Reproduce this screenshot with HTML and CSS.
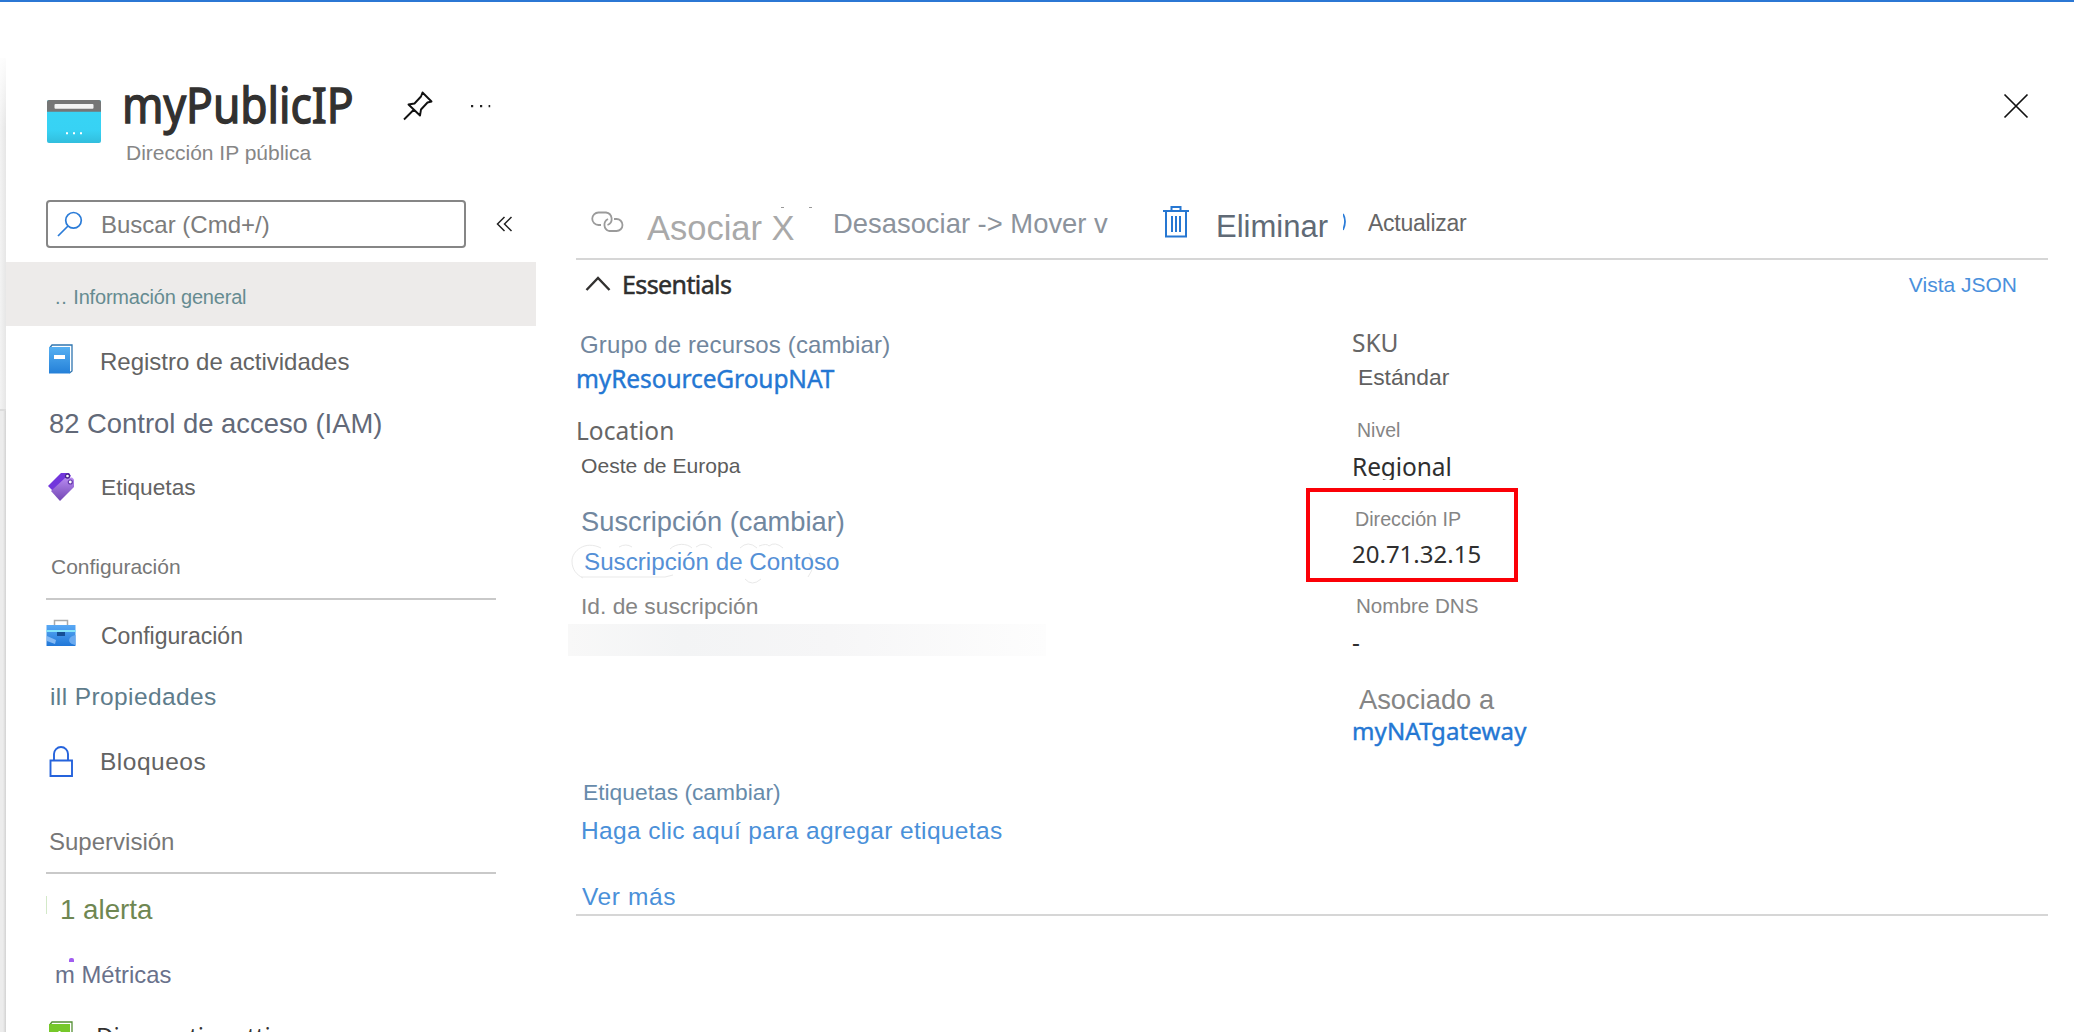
FILE: index.html
```html
<!DOCTYPE html>
<html lang="es">
<head>
<meta charset="utf-8">
<title>myPublicIP</title>
<link rel="stylesheet" href="styles.css">
</head>
<body>
<div class="page">
  <div class="edge"><div class="edge-top"></div><div class="edge-bottom"></div></div>
  <aside class="sidebar">
    <header class="head">
      <svg class="head-icon" width="54" height="43" viewBox="0 0 54 44" preserveAspectRatio="none">
        <defs><linearGradient id="cy" x1="0" y1="0" x2="0" y2="1"><stop offset="0" stop-color="#37d5f6"/><stop offset=".7" stop-color="#37d2f4"/><stop offset="1" stop-color="#32bedd"/></linearGradient></defs>
        <rect width="54" height="44" rx="2" fill="url(#cy)"/>
        <path d="M0 12V2a2 2 0 0 1 2-2h50a2 2 0 0 1 2 2v10z" fill="#767676"/>
        <rect x="7.500" y="4" width="39" height="5" rx="1" fill="#f4f4f4"/>
        <path d="M19 33h2v2h-2zM26 33h2v2h-2zM33 33h2v2h-2z" fill="#fff"/>
      </svg>
      <div class="names">
        <h1 class="title">myPublicIP</h1>
        <div class="kind">Dirección IP pública</div>
      </div>
      <svg class="pin" width="30" height="30" viewBox="0 0 30 30" fill="none" stroke="#111" stroke-width="1.900" stroke-linejoin="round"><path d="M19.500 1.500 28.500 10.500 24.500 11.500 18 18.500 17 24.500 5.500 13.500 11.500 12.500 18 5.500zM10.500 19 1 28.500"/></svg>
      <svg class="more" width="22" height="4" viewBox="0 0 22 4" fill="#222"><path d="M1 1h2.200v2.200H1zM10 1h2.200v2.200H10zM18.600 1h1.600v2.200h-1.600z"/></svg>
    </header>
    <div class="search-row">
      <div class="search">
        <svg width="26" height="26" viewBox="0 0 26 26" fill="none" stroke="#2b7cd8" stroke-width="1.700"><circle cx="16.500" cy="9.300" r="7.800"/><path d="M11 15 1 25"/></svg>
        <span class="search-text">Buscar (Cmd+/)</span>
      </div>
      <svg class="collapse" width="17" height="16" viewBox="0 0 17 16" fill="none" stroke="#222" stroke-width="1.500"><path d="M8.500 1 1.500 8l7 7M15.500 1l-7 7 7 7"/></svg>
    </div>
    <nav class="nav">
      <div class="row overview"><span class="dots">..</span> Información general</div>
      <div class="row activity">
        <svg class="ico" width="30" height="30" viewBox="0 0 30 30"><defs><linearGradient id="bk" x1="0" y1="0" x2="0" y2="1"><stop offset="0" stop-color="#56b0f2"/><stop offset="1" stop-color="#2480d8"/></linearGradient></defs><path d="M4 3.500 6 1h20v26l-2.500 2" fill="#fff" stroke="#2f75b0" stroke-width="1.300"/><path d="M3 3h21v26.500H3z" fill="url(#bk)"/><path d="M8 11h11v4H8z" fill="#fff"/></svg>
        <span>Registro de actividades</span></div>
      <div class="row access">82 Control de acceso (IAM)</div>
      <div class="row tags">
        <svg class="ico" width="30" height="30" viewBox="0 0 30 30"><defs><linearGradient id="tg" x1="0" y1="0" x2="0" y2="1"><stop offset="0" stop-color="#b78af0"/><stop offset="1" stop-color="#7246b4"/></linearGradient></defs><path d="M2 14 15 1h8l2 3-18 15z" fill="#7236dc"/><path d="M5 19 19 6l7-.500 2 2V15L14 29z" fill="url(#tg)"/><circle cx="21.500" cy="4" r="2" fill="#fff" stroke="#4a258f" stroke-width="1.300"/><circle cx="24.300" cy="10" r="2" fill="#fff" stroke="#6339a8" stroke-width="1.200"/></svg>
        <span>Etiquetas</span></div>
      <div class="row section conf-head">Configuración</div>
      <div class="row config">
        <svg class="ico" width="30" height="28" viewBox="0 0 30 28"><defs><linearGradient id="bc" x1="0" y1="0" x2="0" y2="1"><stop offset="0" stop-color="#5aa9f5"/><stop offset="1" stop-color="#2077d8"/></linearGradient></defs><path d="M8.500 7V1.500h13V7" fill="none" stroke="#aaa" stroke-width="1.500"/><path d="M.500 6h29v21H.500z" fill="url(#bc)"/><path d="M.500 11h29v2H.500z" fill="#84e4fa"/><path d="M11 13h8v4h-8z" fill="#164f96"/><path d="m1 17 9 4-1 4-8-3z" fill="#83b9f4"/><path d="M29.500 16v10c-8-1-9-8 0-10z" fill="#6aaaf0"/></svg>
        <span>Configuración</span></div>
      <div class="row props">ill Propiedades</div>
      <div class="row locks">
        <svg class="ico" width="30" height="32" viewBox="0 0 30 32" fill="none" stroke="#2563dc" stroke-width="1.900"><path d="M4.500 14.500h21.500v15.500H4.500zM8 14V8a7 7 0 0 1 14 0v6"/></svg>
        <span>Bloqueos</span></div>
      <div class="row section sup-head">Supervisión</div>
      <div class="row alert">1 alerta</div>
      <div class="row metrics">m Métricas</div>
      <div class="row diag">
        <svg class="ico" width="30" height="30" viewBox="0 0 30 30"><path d="M4 3.500 6 1h20v26l-2.500 2" fill="#fff" stroke="#549033" stroke-width="1.300"/><path d="M3 3h21v26.500H3z" fill="#76c82a"/><path d="M12.500 10h2v8h-2z" fill="#fff"/></svg>
        <span>Diagnostic settings</span></div>
    </nav>
  </aside>
  <main class="main">
    <div class="close-row"><svg width="26" height="26" viewBox="0 0 26 26" fill="none" stroke="#111" stroke-width="1.700"><path d="M1.500 1.500l23 23M24.500 1.500l-23 23"/></svg></div>
    <div class="toolbar">
      <svg class="link" width="34" height="22" viewBox="0 0 34 22" fill="none" stroke="#9b9b9b" stroke-width="1.800"><path d="M10 14H7.500a6 6 0 0 1 0-12.500H15A6.500 6.500 0 0 1 16.500 14M23 8h2.500a6 6 0 0 1 0 12H18a6.500 6.500 0 0 1-1-12"/></svg>
      <span class="associate">Asociar X<svg class="specks" width="34" height="3" viewBox="0 0 34 3" fill="#999"><path d="M1 1h3v1H1zM29 1h3v1h-3z"/></svg></span>
      <span class="dissociate">Desasociar -&gt; Mover v</span>
      <svg class="trash" width="28" height="34" viewBox="0 0 28 34" fill="none" stroke="#2677d2" stroke-width="2"><path d="M1 6h26M9.500 6V2h9v4M4 6v25.500h20V6M10 11v16M14 11v16M18 11v16"/></svg>
      <span class="delete">Eliminar</span>
      <svg class="arc" width="5" height="18" viewBox="0 0 5 18" fill="none" stroke="#2b7cd8" stroke-width="1.800"><path d="M0 1q4 7 0 16"/></svg>
      <span class="refresh">Actualizar</span>
    </div>
    <div class="essentials">
      <svg width="26" height="16" viewBox="0 0 26 16" fill="none" stroke="#323130" stroke-width="2.400"><path d="M1.500 14 13 2l11.500 12"/></svg>
      <span class="ess-title">Essentials</span>
      <span class="json">Vista JSON</span>
    </div>
    <div class="details">
      <div class="col">
        <div class="f rg">Grupo de recursos (cambiar)</div>
        <div class="f s rg-name">myResourceGroupNAT</div>
        <div class="f s loc">Location</div>
        <div class="f loc-val">Oeste de Europa</div>
        <div class="f sub">Suscripción (cambiar)</div>
        <div class="f sub-val">Suscripción de Contoso<svg class="halo" width="244" height="42" viewBox="0 0 244 42" fill="none" stroke="#e9e9e9" stroke-width="1"><path d="M30 5C14-3 1 8 1 18c0 9 5 14 11 17M48 4q7-4 13 0M99 6c6-6 17-6 22-1M125 4q8-6 16 1M169 5q8-8 17 0M188 3q8-3 10 0 6-5 14 2M238 10q8 12-1 24M174 36q7 8 16 0M10 34h84l8-2"/></svg></div>
        <div class="f id">Id. de suscripción</div>
        <div class="redacted"></div>
        <div class="f tg">Etiquetas (cambiar)</div>
        <div class="f tg-val">Haga clic aquí para agregar etiquetas</div>
        <div class="f seemore">Ver más</div>
      </div>
      <div class="col">
        <div class="f s sku">SKU</div>
        <div class="f sku-val">Estándar</div>
        <div class="f tier">Nivel</div>
        <div class="f s tier-val">Regional</div>
        <div class="ipbox">
          <div class="f ip">Dirección IP</div>
          <div class="f s ip-val">20.71.32.15</div>
        </div>
        <div class="f dns">Nombre DNS</div>
        <div class="f s dns-val">-</div>
        <div class="f assoc">Asociado a</div>
        <div class="f s assoc-val">myNATgateway</div>
      </div>
    </div>
  </main>
</div>
</body>
</html>
```
FILE: styles.css
```css
* { box-sizing: border-box; }
body { margin: 0; background: #fff; font-family: "Liberation Sans", Arial, sans-serif; }
svg { display: block; flex: none; }
.page { display: flex; width: 2074px; height: 1032px; overflow: hidden; border-top: 2px solid #2b77d4; white-space: nowrap; line-height: 30px; }
.edge { width: 6px; height: 1030px; padding-top: 56px; flex: none; }
.edge-top { height: 351px; background: linear-gradient(180deg, rgba(255,255,255,.9), rgba(255,255,255,0) 70px), linear-gradient(90deg, #f3f3f3, #e6e6e6); }
.edge-bottom { height: 623px; border-top: 2px solid #dcdcdc; background: linear-gradient(90deg, #ececec 3px, #d2d2d2 6px); }

.sidebar { width: 530px; flex: none; }
.head { display: flex; align-items: flex-start; height: 198px; padding-left: 41px; }
.head-icon { margin-top: 98px; }
.names { width: 302px; padding-top: 69px; padding-left: 21px; }
.title { margin: 0; height: 67px; font: 400 49px/66px "Noto Sans", sans-serif; color: #323130; -webkit-text-stroke: 1.4px #323130; transform: scaleX(.905); transform-origin: 0 0; }
.kind { margin-left: 4px; font-size: 21px; color: #868686; }
.pin { margin-top: 89px; }
.more { margin: 102px 0 0 37px; }
.search-row { display: flex; align-items: center; height: 48px; padding-left: 40px; }
.search { display: flex; align-items: center; width: 420px; height: 48px; padding-left: 9px; border: 2px solid #868686; border-radius: 4px; }
.search-text { padding-top: 2px; margin-left: 18px; font-size: 24px; color: #7c7c7c; }
.collapse { margin-left: 30px; }

.nav { margin-top: 14px; }
.row { display: flex; height: 30px; margin-left: 40px; font-size: 24px; color: #636363; }
.ico { margin: -3px 24px 0 0; }
.overview { height: 64px; margin-left: 0; padding: 20px 0 0 49px; background: #edebea; font-size: 20px; letter-spacing: -.2px; color: #668b91; }
.dots { margin-right: 6px; letter-spacing: .6px; }
.activity { margin-top: 21px; }
.access { margin: 32px 0 0 43px; font-size: 27.4px; color: #626978; }
.tags { margin-top: 33px; font-size: 22.7px; }
.tags .ico { margin: 0 25px 0 0; }
.section { height: 48px; width: 450px; border-bottom: 2px solid #c9c9c9; color: #777; }
.conf-head { margin-top: 50px; padding-left: 5px; font-size: 21px; }
.config { margin-top: 21px; font-size: 23px; }
.config .ico { margin: -2px 25px 0 0; }
.props { margin: 31px 0 0 44px; font-size: 24.5px; letter-spacing: .4px; color: #5e7c8b; }
.locks { margin-top: 35px; font-size: 24.5px; letter-spacing: .5px; }
.locks .ico { margin-top: -1px; }
.sup-head { height: 47px; margin-top: 50px; padding-left: 3px; }
.alert { height: 18px; margin-top: 22px; margin-left: 40px; padding-left: 13px; border-left: 1px solid #d3e9c8; font-size: 27.7px; color: #6f8752; line-height: 28px; }
.metrics { margin: 46px 0 0 49px; color: #69718b; font-size: 23.8px; position: relative; }
.metrics::before { content: ""; position: absolute; left: 14px; top: -2px; width: 5px; height: 4px; border-radius: 2px 2px 0 0; background: #a15df0; }
.diag { margin-top: 31px; font: 24.1px/30px "Noto Sans", sans-serif; color: #323130; }
.diag .ico { margin: 0 20px 0 0; }

.main { width: 1538px; padding: 91px 26px 0 40px; }
.close-row { display: flex; justify-content: flex-end; height: 113px; padding-right: 19px; }
.toolbar { display: grid; grid-template-columns: 71px 186px 329px 54px 127px 25px auto; align-items: start; height: 54px; border-bottom: 2px solid #d6d6d6; }
.link { margin: 5px 0 0 15px; }
.associate { position: relative; margin-top: 7px; font-size: 34.5px; color: #a9a9a9; }
.specks { position: absolute; left: 133px; top: -7px; }
.dissociate { margin-top: 3px; font-size: 27.4px; color: #8c939c; }
.trash { margin: -1px 0 0 0; }
.delete { margin-top: 6px; font-size: 31px; color: #606a76; }
.arc { margin-top: 7px; }
.refresh { margin-top: 2px; font-size: 23px; letter-spacing: -.25px; color: #666; }

.essentials { display: flex; align-items: flex-start; height: 70px; padding: 9px 31px 0 9px; }
.essentials svg { margin-top: 7px; }
.ess-title { margin-left: 11px; font: 400 25px/30px "Noto Sans", sans-serif; letter-spacing: -.6px; color: #2f2f2f; -webkit-text-stroke: .5px #2f2f2f; }
.json { margin: 1px 0 0 auto; font-size: 21px; color: #4a90dc; }
.details { display: grid; grid-template-columns: 776px auto; height: 586px; border-bottom: 2px solid #d6d6d6; }
.f { height: 30px; }
.s { font-family: "Noto Sans", sans-serif; font-size: 24.500px; }
.rg { margin-left: 4px; font-size: 24px; letter-spacing: .13px; color: #71869d; }
.rg-name { margin-top: 4px; letter-spacing: -.1px; color: #2477d3; -webkit-text-stroke: .4px #2477d3; }
.loc { margin-top: 22px; color: #666; }
.loc-val { margin: 5px 0 0 5px; font-size: 21.1px; color: #5c5c5c; }
.sub { margin: 26px 0 0 5px; font-size: 27.3px; color: #71879f; }
.sub-val { position: relative; margin: 10px 0 0 8px; font-size: 24.2px; color: #5490d6; }
.halo { position: absolute; left: -13px; top: -4px; z-index: -1; }
.id { margin: 14px 0 0 5px; font-size: 22.8px; color: #858585; }
.redacted { width: 478px; height: 32px; margin: 3px 0 0 -8px; background: linear-gradient(90deg, #f8f8f8, #f3f4f5 24%, #f6f6f7 55%, #fdfdfd); }
.tg { margin: 121px 0 0 7px; font-size: 22.8px; color: #678bab; }
.tg-val { margin: 9px 0 0 5px; font-size: 24.5px; letter-spacing: .35px; color: #4a90d9; }
.seemore { margin: 36px 0 0 6px; font-size: 24.5px; letter-spacing: .6px; color: #4a90d9; }
.sku { margin-top: -2px; color: #666; }
.sku-val { margin: 4px 0 0 6px; font-size: 22.8px; color: #606060; }
.tier { margin: 23px 0 0 5px; font-size: 19.5px; color: #858585; }
.tier-val { height: 28px; margin-top: 7px; overflow: hidden; letter-spacing: -.1px; color: #2f2f2f; }
.ipbox { width: 212px; height: 94px; margin: 8px 0 0 -46px; padding: 12px 0 0 42px; border: 4px solid #fb0007; }
.ip { margin-left: 3px; font-size: 19.7px; color: #858585; }
.ip-val { margin-top: 5px; font-size: 24px; color: #2f2f2f; }
.dns { margin: 9px 0 0 4px; font-size: 20.6px; color: #858585; }
.dns-val { margin-top: 7px; color: #2f2f2f; }
.assoc { margin: 27px 0 0 7px; font-size: 27.3px; color: #858585; }
.assoc-val { margin-top: 1px; font-size: 24px; letter-spacing: .15px; color: #2477d3; -webkit-text-stroke: .4px #2477d3; }
```
